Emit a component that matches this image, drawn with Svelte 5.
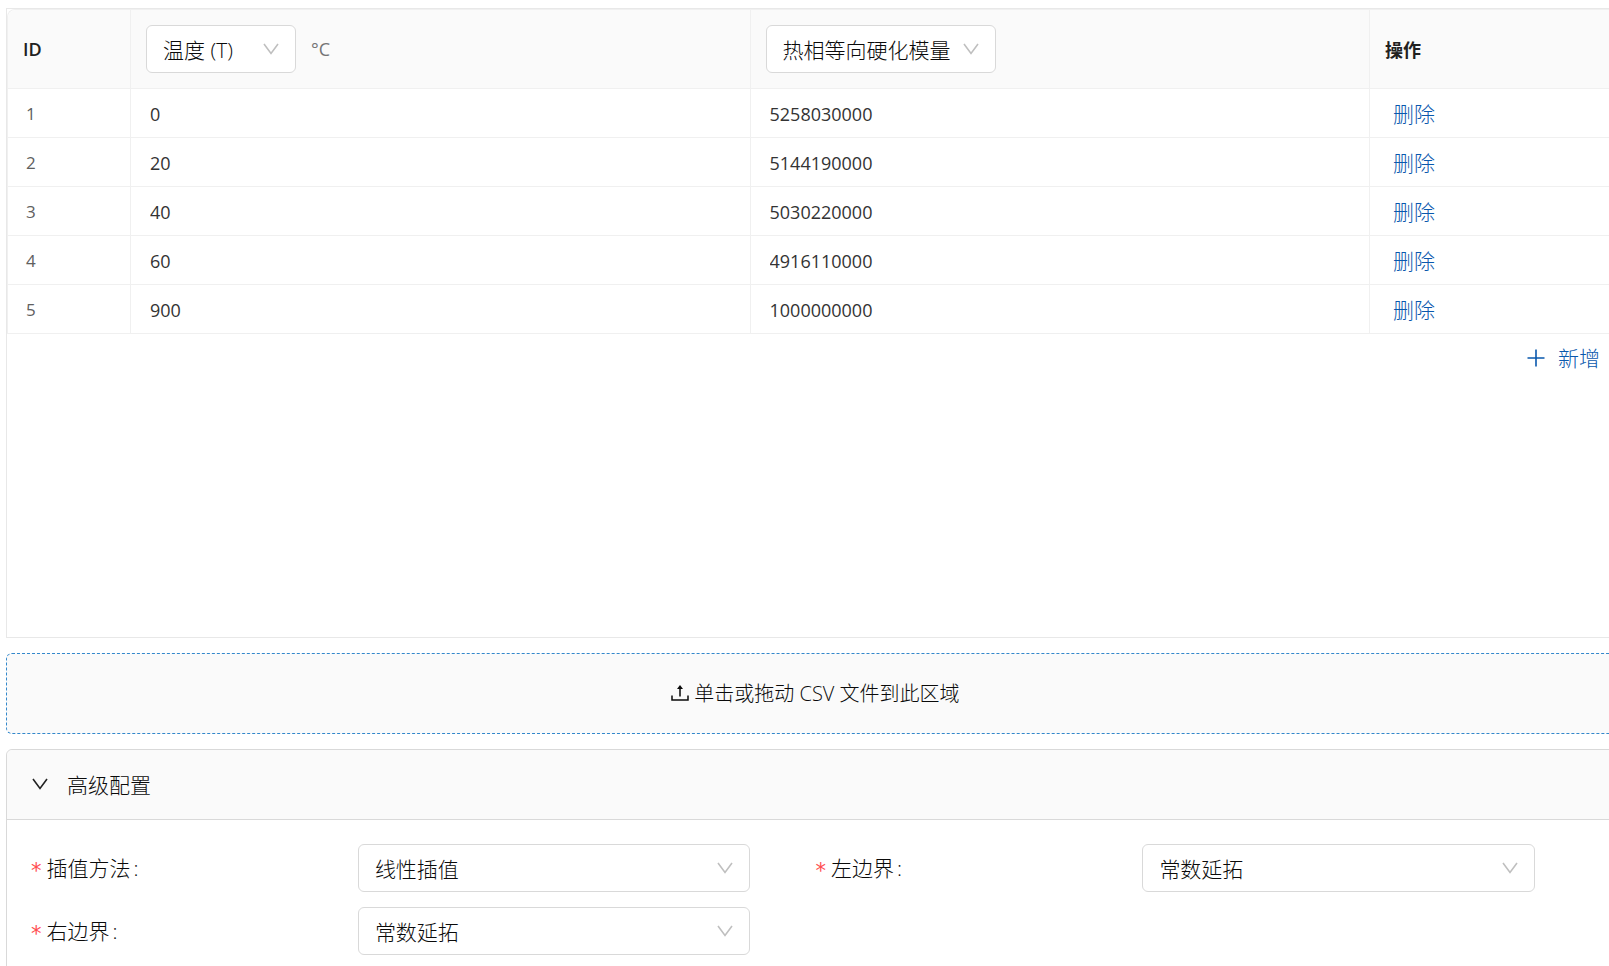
<script lang="ts">
  type Row = { temperature: string; modulus: string };

  let rows = $state<Row[]>([
    { temperature: '0', modulus: '5258030000' },
    { temperature: '20', modulus: '5144190000' },
    { temperature: '40', modulus: '5030220000' },
    { temperature: '60', modulus: '4916110000' },
    { temperature: '900', modulus: '1000000000' },
  ]);

  let advancedOpen = $state(true);

  const fields = [
    { id: 'method', label: '插值方法', value: '线性插值' },
    { id: 'left', label: '左边界', value: '常数延拓' },
    { id: 'right', label: '右边界', value: '常数延拓' },
  ];

  function addRow() {
    rows.push({ temperature: '', modulus: '' });
  }

  function removeRow(index: number) {
    rows.splice(index, 1);
  }
</script>

{#snippet chevron()}
  <svg class="chevron" viewBox="0 0 16 16" aria-hidden="true">
    <path d="M1 3 L8 12.4 L15 3" />
  </svg>
{/snippet}

<main class="viewport">
  <div class="page">
    <section class="panel">
      <table>
        <colgroup>
          <col class="col-id" />
          <col />
          <col />
          <col class="col-action" />
        </colgroup>
        <thead>
          <tr>
            <th>ID</th>
            <th>
              <div class="head-cell">
                <div class="select select-short">
                  <select aria-label="温度 (T)">
                    <option>温度 (T)</option>
                  </select>
                  {@render chevron()}
                </div>
                <span class="unit">°C</span>
              </div>
            </th>
            <th>
              <div class="select select-medium">
                <select aria-label="热相等向硬化模量">
                  <option>热相等向硬化模量</option>
                </select>
                {@render chevron()}
              </div>
            </th>
            <th>操作</th>
          </tr>
        </thead>
        <tbody>
          {#each rows as row, i}
            <tr>
              <td class="row-id">{i + 1}</td>
              <td><input type="text" aria-label="温度 (T)" bind:value={row.temperature} /></td>
              <td><input type="text" aria-label="热相等向硬化模量" bind:value={row.modulus} /></td>
              <td><button class="link" onclick={() => removeRow(i)}>删除</button></td>
            </tr>
          {/each}
        </tbody>
      </table>
      <div class="panel-footer">
        <button class="link add" onclick={addRow}>
          <svg class="plus" viewBox="0 0 18 18" aria-hidden="true">
            <path d="M9 0.5 V17.5 M0.5 9 H17.5" />
          </svg>
          新增
        </button>
      </div>
    </section>

    <label class="dropzone">
      <input type="file" accept=".csv" hidden />
      <svg class="upload" viewBox="0 0 18 18" aria-hidden="true">
        <path d="M1 11.5 V16 H17 V11.5 M9 12.5 V4" />
        <path class="head" d="M9 1 L12 5 H6 Z" />
      </svg>
      <span>单击或拖动 CSV 文件到此区域</span>
    </label>

    <section class="collapse">
      <button
        class="collapse-header"
        aria-expanded={advancedOpen}
        onclick={() => (advancedOpen = !advancedOpen)}
      >
        {@render chevron()}
        高级配置
      </button>
      {#if advancedOpen}
        <div class="form">
          {#each fields as field}
            <div class="field">
              <label for={field.id}><span class="required">*</span>{field.label}<span class="colon">:</span></label>
              <div class="select">
                <select id={field.id}>
                  <option>{field.value}</option>
                </select>
                {@render chevron()}
              </div>
            </div>
          {/each}
        </div>
      {/if}
    </section>
  </div>
</main>

<style>
  :global(body) {
    background: #fff;
  }

  .viewport {
    height: 100vh;
    overflow: hidden;
    font-family: 'Open Sans', 'Noto Sans CJK SC', sans-serif;
    font-size: 21px;
    font-weight: 300;
    color: #0a0a0a;
  }

  /* The content is a little wider than the window, so its right edge is cut off */
  .page {
    display: flex;
    flex-direction: column;
    gap: 15px;
    margin-right: -16px;
    padding: 8px 0 0 6px;
  }

  button,
  input,
  select {
    font: inherit;
    color: inherit;
  }

  button {
    padding: 0;
    border: none;
    background: none;
    cursor: pointer;
  }

  .panel {
    box-sizing: border-box;
    height: 630px;
    overflow: auto;
    border: 1px solid #e8e8e8;
  }

  table {
    width: 100%;
    table-layout: fixed;
    border-collapse: separate;
    border-spacing: 0;
    border: 1px solid #f0f0f0;
    border-width: 1px 0 0 1px;
    border-radius: 8px 0 0 0;
  }

  .col-id {
    width: 123px;
  }

  .col-action {
    width: 254px;
  }

  th,
  td {
    box-sizing: border-box;
    padding: 0 15px;
    border: 1px solid #f0f0f0;
    border-width: 0 1px 1px 0;
    text-align: left;
    vertical-align: middle;
  }

  th {
    height: 79px;
    background: #fafafa;
    font-size: 18px;
    font-weight: 600;
    color: #212121;
  }

  th:first-child {
    border-top-left-radius: 8px;
  }

  td {
    height: 49px;
    font-size: 18px;
    font-weight: 400;
    color: #333;
  }

  td input {
    box-sizing: border-box;
    width: 100%;
    height: 44px;
    padding: 2px 4px 0;
    border: none;
    outline: none;
    background: transparent;
  }

  td .link {
    padding: 2px 8px 0;
  }

  .row-id {
    padding-left: 18px;
    font-size: 17px;
    color: #606060;
  }

  .head-cell {
    display: flex;
    align-items: center;
    gap: 15px;
  }

  .unit {
    font-weight: 400;
    color: #757575;
  }

  .select {
    position: relative;
    font-size: 21px;
    font-weight: 300;
    color: #0a0a0a;
  }

  .select-short {
    width: 150px;
  }

  .select-medium {
    width: 230px;
  }

  select {
    box-sizing: border-box;
    display: block;
    width: 100%;
    height: 48px;
    padding: 1px 16px 0;
    border: 1px solid #d9d9d9;
    border-radius: 6px;
    outline: none;
    background: #fff;
    appearance: none;
  }

  .chevron {
    width: 16px;
    height: 16px;
    fill: none;
    stroke: #212121;
    stroke-width: 1.6;
  }

  .select .chevron {
    position: absolute;
    top: 16px;
    right: 17px;
    stroke: #bfbfbf;
    pointer-events: none;
  }

  .link {
    font-size: 21px;
    font-weight: 300;
    line-height: 32px;
    color: #0958ad;
  }

  .panel-footer {
    display: flex;
    justify-content: flex-end;
    padding: 8px 24px;
  }

  .add {
    display: flex;
    align-items: center;
    gap: 13px;
  }

  .plus {
    width: 18px;
    height: 18px;
    fill: none;
    stroke: currentColor;
    stroke-width: 1.6;
  }

  .dropzone {
    box-sizing: border-box;
    display: flex;
    align-items: center;
    justify-content: center;
    gap: 5px;
    height: 81px;
    padding-bottom: 2px;
    border: 1px dashed #3388cc;
    border-radius: 6px;
    background: #fafafa;
    font-size: 20px;
    cursor: pointer;
  }

  .upload {
    width: 18px;
    height: 18px;
    fill: none;
    stroke: currentColor;
    stroke-width: 1.5;
  }

  .upload .head {
    fill: currentColor;
    stroke: none;
  }

  .collapse {
    border: 1px solid #d9d9d9;
    border-radius: 6px;
  }

  .collapse-header {
    box-sizing: border-box;
    display: flex;
    align-items: center;
    gap: 19px;
    width: 100%;
    height: 70px;
    padding: 0 25px 2px;
    border-bottom: 1px solid #d9d9d9;
    border-radius: 6px 6px 0 0;
    background: #fafafa;
  }

  .form {
    display: grid;
    grid-template-columns: 1fr 1fr;
    row-gap: 15px;
    padding: 24px;
  }

  .field {
    display: grid;
    grid-template-columns: 5fr 6fr 1fr;
    align-items: center;
  }

  .field label {
    display: flex;
    align-items: center;
    line-height: 30px;
  }

  .required {
    padding-top: 6px;
    margin-right: 5px;
    font-family: 'DejaVu Sans', sans-serif;
    font-weight: 400;
    color: #ff4d4f;
  }

  .colon {
    margin-left: 3px;
  }
</style>
